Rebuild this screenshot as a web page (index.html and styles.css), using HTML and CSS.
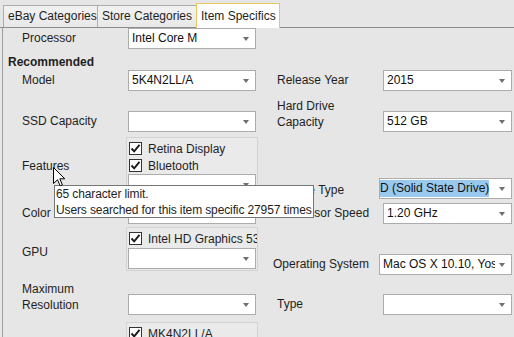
FILE: index.html
```html
<!DOCTYPE html>
<html lang="en">
<head>
    <meta charset="utf-8">
    <title>Item Specifics</title>
    <link rel="stylesheet" href="styles.css">
</head>
<body>
    <!-- Tab strip -->
    <div class="tabs">
        <div class="tab t1">eBay Categories</div>
        <div class="tab t2">Store Categories</div>
        <div class="tab active">Item Specifics</div>
    </div>

    <div class="panel">
        <div class="form">
            <!-- Processor -->
            <div class="lbl">Processor</div>
            <div class="combo"><span class="val">Intel Core M</span></div>
            <div></div>
            <div></div>

            <div class="heading">Recommended</div>

            <!-- Model / Release Year -->
            <div class="lbl">Model</div>
            <div class="combo"><span class="val">5K4N2LL/A</span></div>
            <div class="lbl right">Release Year</div>
            <div class="combo"><span class="val">2015</span></div>

            <!-- SSD / Hard Drive -->
            <div class="lbl">SSD Capacity</div>
            <div class="combo"><span class="val"></span></div>
            <div class="lbl right two hdd">Hard Drive<br>Capacity</div>
            <div class="combo"><span class="val">512 GB</span></div>

            <!-- Features / Storage Type -->
            <div class="lbl features">Features</div>
            <div class="group">
                <div class="check"><span class="box"><svg width="11" height="11" viewBox="0 0 11 11"><path d="M1.5 5.5 L4.2 8.4 L9.5 1.8" /></svg></span>Retina Display</div>
                <div class="check"><span class="box"><svg width="11" height="11" viewBox="0 0 11 11"><path d="M1.5 5.5 L4.2 8.4 L9.5 1.8" /></svg></span>Bluetooth</div>
                <div class="combo"><span class="val"></span></div>
            </div>
            <div class="lbl right shift storage">Storage Type</div>
            <div class="combo shift storage"><span class="val sel-wrap"><span class="sel">D (Solid State Drive)</span></span></div>

            <!-- Color / Processor Speed -->
            <div class="lbl">Color</div>
            <div class="combo"><span class="val"></span></div>
            <div class="lbl right">Processor Speed</div>
            <div class="combo"><span class="val">1.20 GHz</span></div>

            <!-- GPU / Operating System -->
            <div class="lbl gpu">GPU</div>
            <div class="group gpu-group">
                <div class="check"><span class="box"><svg width="11" height="11" viewBox="0 0 11 11"><path d="M1.5 5.5 L4.2 8.4 L9.5 1.8" /></svg></span>Intel HD Graphics 5300</div>
                <div class="combo"><span class="val"></span></div>
            </div>
            <div class="lbl right shift os">Operating System</div>
            <div class="combo shift os"><span class="val">Mac OS X 10.10, Yosemite</span></div>

            <!-- Maximum Resolution / Type -->
            <div class="lbl two maxres">Maximum<br>Resolution</div>
            <div class="combo"><span class="val"></span></div>
            <div class="lbl right">Type</div>
            <div class="combo"><span class="val"></span></div>

            <!-- MPN -->
            <div></div>
            <div class="group last">
                <div class="check"><span class="box"><svg width="11" height="11" viewBox="0 0 11 11"><path d="M1.5 5.5 L4.2 8.4 L9.5 1.8" /></svg></span>MK4N2LL/A</div>
            </div>
        </div>
    </div>

    <!-- Tooltip over the form -->
    <div class="tooltip">
        <div>65 character limit.</div>
        <div>Users searched for this item specific 27957 times</div>
    </div>

    <!-- Mouse pointer -->
    <svg class="cursor" width="13" height="20" viewBox="0 0 13 20">
        <path d="M0.5 0.5 V16.5 L4.5 12.8 L7.2 18.8 L9.4 17.8 L6.8 11.8 H11.8 Z" />
    </svg>
</body>
</html>
```

FILE: styles.css
```css
html, body {
    margin: 0;
    height: 337px;
    overflow: hidden;
}

body {
    background-color: #e6e6e6;
    font-family: "Liberation Sans", Arial, sans-serif;
    font-size: 12px;
    color: #1e1e1e;
}

/* Tabs */
.tabs {
    display: flex;
    align-items: flex-end;
    height: 27px;
    padding-left: 3px;
    border-bottom: 1px solid #8c8c8c;
}

.tab {
    box-sizing: border-box;
    height: 22px;
    line-height: 20px;
    padding-left: 4px;
    border: 1px solid #acacac;
    border-bottom: none;
    background: linear-gradient(#f2f2f2, #e8e8e8);
    white-space: nowrap;
    margin-right: -1px;
}

.t1 {
    width: 95px;
}

.t2 {
    width: 100px;
}

.tab.active {
    width: 84px;
    height: 25px;
    line-height: 24px;
    margin-bottom: -1px;
    background: #ffffff;
    border-color: #e9c663;
    position: relative;
}

/* Panel */
.panel {
    margin-left: 2px;
    border-left: 1px solid #a0a0a0;
    height: 320px;
    overflow: hidden;
}

.form {
    display: grid;
    padding-left: 19px;
    grid-template-columns: 106px 128px 127px 129px;
    grid-template-rows: 27px 15px 41px 26px 66px 24px 67px 26px auto;
}

.heading {
    grid-column: 1 / -1;
    margin-left: -14px;
    font-weight: bold;
    line-height: 15px;
}

.lbl {
    align-self: start;
    line-height: 21px;
    white-space: nowrap;
}

.lbl.right {
    padding-left: 21px;
}

.lbl.right.shift {
    padding-left: 17px;
}

.lbl.two {
    line-height: 16px;
}

.lbl.hdd {
    margin-top: -13px;
}

.lbl.maxres {
    margin-top: -13px;
}

.lbl.features {
    margin-top: 19px;
}

.lbl.gpu {
    margin-top: 15px;
}

/* Combo box */
.combo {
    box-sizing: border-box;
    align-self: start;
    display: flex;
    align-items: center;
    height: 21px;
    background: #ffffff;
    border: 1px solid #acacac;
}

.combo.shift {
    margin-left: -4px;
}

.lbl.storage,
.combo.storage {
    align-self: end;
    margin-bottom: 4px;
}

.lbl.storage {
    margin-bottom: 2px;
}

.lbl.os,
.combo.os {
    margin-top: 27px;
}

.combo::after {
    content: "";
    flex: none;
    margin: 0 6px 0 4px;
    border-left: 3.5px solid transparent;
    border-right: 3.5px solid transparent;
    border-top: 4px solid #6e6e6e;
}

.val {
    flex: 1;
    padding-left: 3px;
    overflow: hidden;
    white-space: nowrap;
    line-height: 19px;
    color: #111111;
}

.val.sel-wrap {
    padding-left: 0;
    line-height: 17px;
}

.sel {
    display: inline-block;
    line-height: 17px;
    background-color: #99c9ef;
}

/* Check list groups */
.group {
    align-self: start;
    box-sizing: border-box;
    width: 132px;
    margin-left: -2px;
    padding: 2px 1px 0;
    border: 1px solid #d3d3d3;
    background-color: #eaeaea;
    overflow: hidden;
}

.gpu-group {
    padding-bottom: 1px;
}

.gpu-group .combo {
    margin-top: 1px;
}

.group.last {
    margin-top: 2px;
    height: 40px;
}

.check {
    display: flex;
    align-items: center;
    height: 17px;
    white-space: nowrap;
}

.box {
    box-sizing: border-box;
    display: flex;
    align-items: center;
    justify-content: center;
    flex: none;
    width: 13px;
    height: 13px;
    margin: 0 6px 0 1px;
    background: #ffffff;
    border: 1px solid #333333;
}

.box path {
    fill: none;
    stroke: #1a1a1a;
    stroke-width: 1.9;
}

/* Tooltip */
.tooltip {
    position: absolute;
    left: 54px;
    top: 185px;
    box-sizing: border-box;
    width: 260px;
    height: 33px;
    padding-left: 1px;
    background: #ffffff;
    border: 1px solid #767676;
    line-height: 16px;
    letter-spacing: -0.12px;
    white-space: nowrap;
    overflow: hidden;
    color: #1e1e1e;
}

.cursor {
    position: absolute;
    left: 53px;
    top: 167px;
}

.cursor path {
    fill: #ffffff;
    stroke: #000000;
    stroke-width: 1;
}
```
